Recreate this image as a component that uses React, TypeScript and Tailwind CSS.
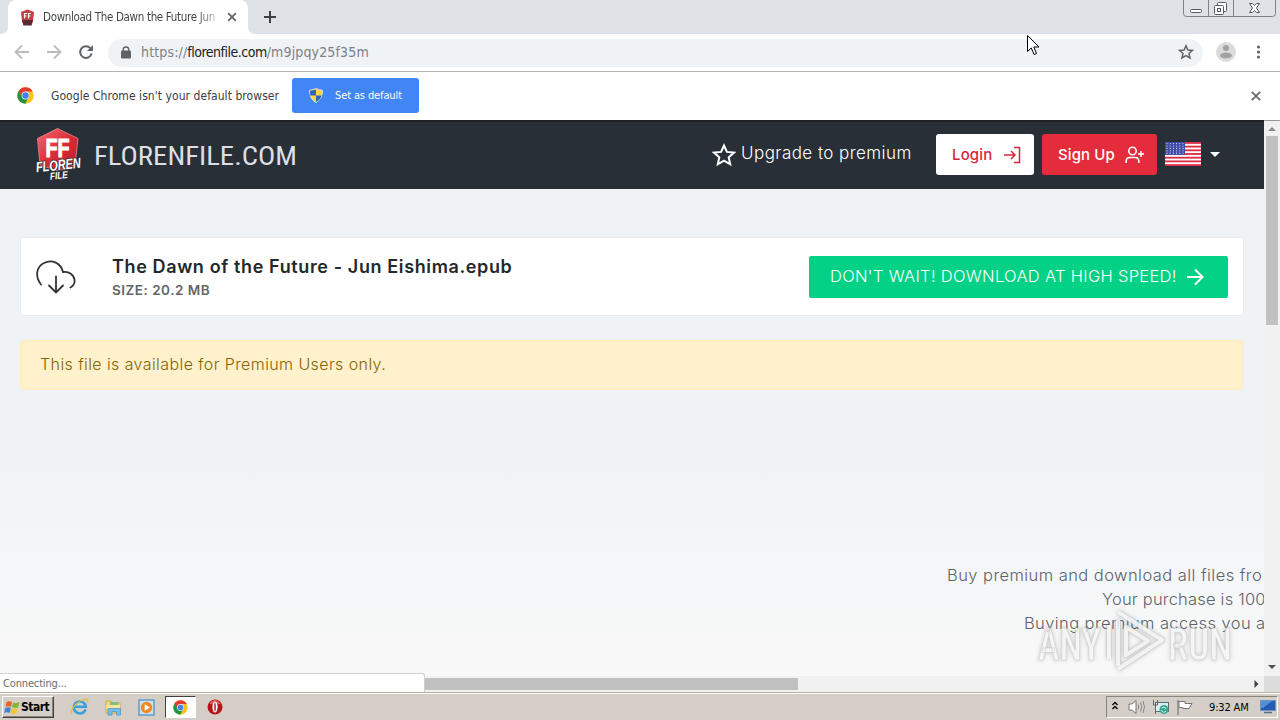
import type { ReactNode } from "react";

const UI_FONT = "font-['DejaVu_Sans_Condensed','DejaVu_Sans',sans-serif] [font-stretch:condensed]";

function ChromeLogo({ size }: { size: number }) {
  return (
    <svg width={size} height={size} viewBox="0 0 48 48">
      <circle cx="24" cy="24" r="23" fill="#fbc116" />
      <path d="M4 12.500A23 23 0 0 1 44 12.500H24L15 30Z" fill="#e33b2e" />
      <path d="M4 12.500A23 23 0 0 0 23 47L33 29 24 34 15 29Z" fill="#229342" />
      <circle cx="24" cy="24" r="11" fill="#e8eefb" />
      <circle cx="24" cy="24" r="9" fill="#3f82f0" />
    </svg>
  );
}

function FlorenIcon() {
  return (
    <svg width="15" height="17" viewBox="0 0 15 17" className="shrink-0">
      <path d="M7.500 0.500L14 3 13 12 11.500 16H3.500L2 12 1 3Z" fill="#c93a44" />
      <path d="M2 11H13L11.500 16.500H3.500Z" fill="#5a2c30" />
      <path d="M4.500 9.500V4.500H7M4.500 7H6.500M8.500 9.500V4.500H11M8.500 7H10.500" fill="none" stroke="#fff" strokeWidth="1.200" />
    </svg>
  );
}

function FlorenLogo() {
  return (
    <svg width="50" height="56" viewBox="0 0 50 56" className="shrink-0 overflow-visible font-['Liberation_Sans',sans-serif] font-bold">
      <defs>
        <linearGradient id="shield" x1="0" y1="0" x2="1" y2="1">
          <stop offset="0" stopColor="#f46a72" />
          <stop offset="0.500" stopColor="#dc2c38" />
          <stop offset="1" stopColor="#b51c26" />
        </linearGradient>
      </defs>
      <path d="M24.500 1.500L45 11.500 42 38 25 44 7 38 4.500 11.500Z" fill="url(#shield)" stroke="#e98a90" strokeWidth="0.800" />
      <text x="12.500" y="29.500" fontSize="26" textLength="24" lengthAdjust="spacingAndGlyphs" fill="#fff" stroke="#fff" strokeWidth="1">
        FF
      </text>
      <g transform="rotate(-6 25 40)">
        <text x="3" y="43" fontSize="14.500" fontStyle="italic" textLength="45" lengthAdjust="spacingAndGlyphs" fill="#fff" stroke="#292f36" strokeWidth="1.500" paintOrder="stroke">
          FLOREN
        </text>
      </g>
      <g transform="rotate(-5 25 50)">
        <text x="17" y="52" fontSize="10" fontStyle="italic" textLength="18" lengthAdjust="spacingAndGlyphs" fill="#fff">
          FILE
        </text>
      </g>
    </svg>
  );
}

function UsFlag() {
  return (
    <svg width="36" height="24" viewBox="0 0 36 24" className="shrink-0">
      <rect width="36" height="24" fill="#fff" />
      {[0, 1, 2, 3, 4, 5, 6].map((i) => (
        <rect key={i} y={i * 3.69} width="36" height="1.850" fill="#dc2f45" />
      ))}
      <rect width="20" height="12.920" fill="#3e4ba8" />
      {[0, 1, 2, 3, 4].map((row) =>
        [0, 1, 2, 3, 4, 5].map((col) => (
          <circle key={`${row}-${col}`} cx={2 + col * 3.2} cy={1.6 + row * 2.4} r="0.600" fill="#dfe3f7" />
        ))
      )}
    </svg>
  );
}

function TabStrip() {
  return (
    <div className="flex h-[34px] justify-between bg-[#dee1e6]">
      <div className="flex">
        <svg width="8" height="34" viewBox="0 0 8 34">
          <path d="M8 26Q8 34 0 34H8Z" fill="#fff" />
        </svg>
        <div className="flex w-60 items-center rounded-t-lg bg-white pl-3">
          <FlorenIcon />
          <span className="ml-2 w-[173px] overflow-hidden whitespace-nowrap bg-linear-to-r from-[#3c4043] from-88% to-[#3c404355] bg-clip-text pt-px text-[11.5px] tracking-[-0.330px] text-transparent">
            Download The Dawn the Future Jun
          </span>
          <svg width="10" height="10" viewBox="0 0 10 10" className="ml-[11px]">
            <path d="M1.200 1.200L8.800 8.800M8.800 1.200L1.200 8.800" stroke="#5f6368" strokeWidth="1.700" />
          </svg>
        </div>
        <svg width="30" height="34" viewBox="0 0 30 34">
          <path d="M0 26Q0 34 8 34H0Z" fill="#fff" />
          <path d="M22 11V23M16 17H28" stroke="#3c4043" strokeWidth="2" />
        </svg>
      </div>
      <svg width="93" height="17" viewBox="0 0 93 17" className="mr-1" fill="none">
        <path d="M0.500 0V13.500Q0.500 16.500 3.500 16.500H89.500Q92.500 16.500 92.500 13.500V0M25.500 0V16M50.500 0V16" stroke="#7d838c" />
        <rect x="7.500" y="9.500" width="11" height="3" rx="1" fill="#fff" stroke="#555b65" />
        <rect x="34.500" y="2.500" width="9" height="9" rx="1" fill="#fff" stroke="#555b65" />
        <rect x="31.500" y="5.500" width="9" height="9" rx="1" fill="#fff" stroke="#555b65" />
        <rect x="34.500" y="8.500" width="3" height="3" stroke="#555b65" />
        <path d="M66.500 3.500H69.500L71.500 5.500 73.500 3.500H76.500L73.500 8 76.500 12.500H73.500L71.500 10.500 69.500 12.500H66.500L69.500 8Z" fill="#fff" stroke="#555b65" />
      </svg>
    </div>
  );
}

function Toolbar() {
  return (
    <div className="flex h-[38px] items-center border-b border-[#b4b4b4] bg-white">
      <svg width="108" height="37" viewBox="0 0 108 37" fill="none" className="shrink-0">
        <path d="M29 18H16M22 11.500L15.500 18 22 24.500" stroke="#b9bbbd" strokeWidth="1.800" />
        <path d="M47 18H60M54 11.500L60.500 18 54 24.500" stroke="#b9bbbd" strokeWidth="1.800" />
        <path d="M90.300 14.200A5.800 5.800 0 1 0 91.600 19.500" stroke="#5f6368" strokeWidth="2" />
        <path d="M93 11V17H87Z" fill="#5f6368" />
      </svg>
      <div className="flex h-7 w-[1095px] items-center justify-between rounded-full bg-[#f0f3f5] pr-[9px] pl-[13px]">
        <div className="flex items-center">
          <svg width="10" height="13" viewBox="0 0 10 13">
            <rect y="4.500" width="10" height="8" rx="1" fill="#5f6368" />
            <path d="M2.300 5V3.500Q2.300 1 5 1T7.700 3.500V5" fill="none" stroke="#5f6368" strokeWidth="1.400" />
          </svg>
          <span className="ml-2.5 whitespace-nowrap text-[14px] tracking-[0.150px] text-[#7b8085]">
            https://<span className="tracking-[-0.500px] text-[#202124]">florenfile.com</span>/m9jpqy25f35m
          </span>
        </div>
        <svg width="16" height="16" viewBox="0 0 16 16" className="-mt-0.5">
          <path d="M8 1.800L9.900 6 14.400 6.400 11 9.400 12 13.900 8 11.500 4 13.900 5 9.400 1.600 6.400 6.100 6Z" fill="none" stroke="#5f6368" strokeWidth="1.500" />
        </svg>
      </div>
      <svg width="77" height="37" viewBox="0 0 77 37">
        <circle cx="23" cy="18" r="10" fill="#dcdcdc" />
        <circle cx="23" cy="14" r="3" fill="#a2a2a2" />
        <ellipse cx="23" cy="21.500" rx="6" ry="3" fill="#a2a2a2" />
        <circle cx="55.500" cy="13" r="1.600" fill="#5f6368" />
        <circle cx="55.500" cy="18" r="1.600" fill="#5f6368" />
        <circle cx="55.500" cy="23" r="1.600" fill="#5f6368" />
      </svg>
    </div>
  );
}

function InfoBar() {
  return (
    <div className="flex h-12 items-center bg-white pb-px pl-[17px]">
      <ChromeLogo size={17} />
      <span className="ml-[17px] w-[229px] whitespace-nowrap text-[12px] tracking-[0.060px] text-[#3c4043]">
        Google Chrome isn't your default browser
      </span>
      <div className="ml-3 flex h-[35px] w-[127px] items-center rounded-[3px] bg-[#4285f4] pl-[17px]">
        <svg width="14" height="15" viewBox="0 0 14 15">
          <path d="M7 0.500Q10 2 13.500 2.200Q13.500 11 7 14.500Q0.500 11 0.500 2.200Q4 2 7 0.500Z" fill="#ffd83a" stroke="#d8dde6" />
          <path d="M7 1.500V7.500H1.200Q1 5 1 2.800Q4 2.500 7 1.500ZM7 7.500H12.500Q11.500 11.500 7 14Z" fill="#2f66b8" />
        </svg>
        <span className="ml-3 whitespace-nowrap pt-px text-[11px] tracking-[-0.120px] text-white">Set as default</span>
      </div>
      <svg width="10" height="10" viewBox="0 0 10 10" className="mr-[19px] ml-auto">
        <path d="M0.800 0.800L9.200 9.200M9.200 0.800L0.800 9.200" stroke="#6a6d70" strokeWidth="1.900" />
      </svg>
    </div>
  );
}

function SiteHeader() {
  return (
    <header className="flex h-[69px] items-center border-t-2 border-[#1e2226] bg-[#292f36] pb-0.5 pl-[33px] text-white">
      <FlorenLogo />
      <svg width="206" height="30" viewBox="0 0 206 30" className="ml-2.5">
        <text x="1" y="25" fontSize="25" textLength="203" lengthAdjust="spacingAndGlyphs" fill="#dcdfe5" className="font-['Roboto',sans-serif]">
          FLORENFILE.COM
        </text>
      </svg>
      <div className="ml-auto flex items-center">
        <svg width="24" height="24" viewBox="0 0 24 24" className="mr-[5px]">
          <path d="M12 2.500L14.900 8.900 22 9.600 16.700 14.300 18.200 21.300 12 17.700 5.800 21.300 7.300 14.300 2 9.600 9.100 8.900Z" fill="none" stroke="#fff" strokeWidth="2" />
        </svg>
        <span className="w-[195px] whitespace-nowrap pb-px text-[17px] font-light tracking-[0.450px]">Upgrade to premium</span>
        <div className="flex h-[41px] w-[98px] items-center rounded-[3px] bg-white pl-4 text-[15px] text-[#d3283c]">
          <span className="w-[51px] pt-0.5 font-medium tracking-[0.150px]">Login</span>
          <svg width="18" height="18" viewBox="0 0 18 18" fill="none" stroke="currentColor" strokeWidth="1.500">
            <path d="M1 9H12M8 5L12 9 8 13M11 1.500H16.500V16.500H11" />
          </svg>
        </div>
        <div className="ml-2 flex h-[41px] w-[115px] items-center rounded-[3px] bg-[#e52c3c] pl-4 text-[15px]">
          <span className="w-[67px] whitespace-nowrap pt-0.5 font-medium tracking-[0.100px]">Sign Up</span>
          <svg width="20" height="18" viewBox="0 0 20 18" fill="none" stroke="currentColor" strokeWidth="1.600">
            <circle cx="7.500" cy="5" r="3.700" />
            <path d="M1.200 17V15Q1.200 11.500 5 11.500H10Q13.800 11.500 13.800 15V17M16 5V11M13 8H19" />
          </svg>
        </div>
        <div className="mr-11 ml-2 flex items-center pb-px">
          <UsFlag />
          <svg width="10" height="5" viewBox="0 0 10 5" className="ml-[9px]">
            <path d="M0 0H10L5 5Z" fill="#fff" />
          </svg>
        </div>
      </div>
    </header>
  );
}

function PromoLine({ children, indent }: { children: ReactNode; indent: string }) {
  return <p className={`h-6 overflow-hidden whitespace-nowrap ${indent}`}>{children}</p>;
}

function Watermark() {
  return (
    <svg
      width="200"
      height="70"
      viewBox="0 0 200 70"
      className="absolute top-[606px] left-[1036px] font-['Roboto',sans-serif] drop-shadow-[0_0_2px_#00000040]"
    >
      <g fill="#fff" fillOpacity="0.750" stroke="#c4c4c4" strokeOpacity="0.500" strokeWidth="1" fontSize="45" fontWeight="500">
        <text x="2" y="54" textLength="63" lengthAdjust="spacingAndGlyphs">ANY</text>
        <text x="132" y="54" textLength="64" lengthAdjust="spacingAndGlyphs">RUN</text>
      </g>
      <g fill="none" strokeLinejoin="round">
        <path d="M73 19V53M82 14V60M82 6L126 34 82 63M90 21L112 35 90 49Z" stroke="#c4c4c4" strokeOpacity="0.500" strokeWidth="5.500" />
        <path d="M73 19V53M82 14V60M82 6L126 34 82 63M90 21L112 35 90 49Z" stroke="#fff" strokeOpacity="0.750" strokeWidth="4" />
      </g>
    </svg>
  );
}

function PageContent() {
  return (
    <main className="h-[487px] bg-linear-to-b from-[#eff3f6] from-55% to-[#f8f8f8] to-95% px-5 pt-12 font-['Inter',sans-serif]">
      <div className="-mr-5 w-[1224px]">
        <div className="flex h-[79px] items-center rounded-[4px] border border-[#e8ebed] bg-white pl-[15px]">
          <svg width="40" height="34" viewBox="0 0 40 34" fill="none" stroke="#333" strokeWidth="1.800" strokeLinecap="round">
            <path d="M5 24.500C-1 17 0 7 8 3C16 -1 25 3 27 12C33 11 38 15 38.500 20C39 23 37 26 34.500 27.500" />
            <path d="M20 16.500V32M13 25.500L20 32.500 27 25.500" />
          </svg>
          <div className="ml-9 pt-0.5">
            <h1 className="whitespace-nowrap text-[18px] leading-6 font-semibold tracking-[0.620px] text-[#24282c]">
              The Dawn of the Future - Jun Eishima.epub
            </h1>
            <p className="whitespace-nowrap text-[13.5px] leading-[22px] font-semibold tracking-[0.500px] text-[#666]">SIZE: 20.2 MB</p>
          </div>
          <div className="mr-[15px] ml-auto flex h-[42px] w-[419px] items-center rounded-[2px] bg-[#03d286] pl-[21px] text-white">
            <span className="w-[356px] whitespace-nowrap text-[16.5px] font-light tracking-[0.310px]">DON'T WAIT! DOWNLOAD AT HIGH SPEED!</span>
            <svg width="18" height="18" viewBox="0 0 18 18" fill="none" stroke="currentColor" strokeWidth="2">
              <path d="M1 9H16M9 1.500L16.500 9 9 16.500" />
            </svg>
          </div>
        </div>
        <div className="mt-6 flex h-[50px] items-center rounded-[4px] border border-[#ffeeba] bg-[#fff1cc] pb-0.5 pl-[19px] text-[16px] font-light tracking-[0.410px] text-[#856404]">
          This file is available for Premium Users only.
        </div>
      </div>
      <div className="-mr-5 mt-[173px] text-[16.5px] leading-6 font-light text-[#5c636a]">
        <PromoLine indent="pl-[927px] tracking-[0.440px]">Buy premium and download all files fro</PromoLine>
        <PromoLine indent="pl-[1082px] tracking-[0.200px]">Your purchase is 100</PromoLine>
        <PromoLine indent="pl-[1004px] tracking-[0.400px]">Buying premium access you a</PromoLine>
      </div>
    </main>
  );
}

function VerticalScrollbar() {
  return (
    <div className="flex w-4 flex-col items-center justify-between border-t border-[#9a9a9a] bg-[#f1f1f1]">
      <div>
        <svg width="12" height="15" viewBox="0 0 12 15">
          <path d="M2 10H10L6 6Z" fill="#8a8a8a" />
        </svg>
        <div className="h-[189px] w-3 bg-[#c1c1c1]" />
      </div>
      <svg width="12" height="16" viewBox="0 0 12 16">
        <path d="M2 5H10L6 9Z" fill="#505050" />
      </svg>
    </div>
  );
}

function HorizontalScrollbar() {
  return (
    <div className="relative flex h-4 bg-[#dcdcdc]">
      <div className="flex w-[1264px] items-center justify-between bg-[#f1f1f1] pr-[5px] pl-[424px]">
        <div className="h-3 w-[374px] bg-[#c1c1c1]" />
        <svg width="5" height="8" viewBox="0 0 5 8">
          <path d="M0.500 0L4.500 4 0.500 8Z" fill="#404040" />
        </svg>
      </div>
      <div className="absolute -top-[3px] left-0 flex h-[19px] w-[425px] items-center rounded-tr-[3px] border-t border-r border-[#d0d0d0] bg-white pt-0.5 pl-[3px] text-[11px] tracking-[-0.150px] text-[#6a6d70]">
        Connecting...
      </div>
    </div>
  );
}

function Taskbar() {
  return (
    <footer className="flex h-7 items-center border-t border-[#b5b1a9] bg-[#d5cec6] pb-px shadow-[inset_0_1px_0_#fff]">
      <div className="mt-0.5 ml-0.5 flex h-[22px] w-[52px] items-center border border-t-white border-r-[#404040] border-b-[#404040] border-l-white pl-px text-[12px] font-bold tracking-[-0.500px] text-black shadow-[inset_-1px_-1px_0_#8a867e]">
        <svg width="16" height="15" viewBox="0 0 16 15" className="mr-px shrink-0">
          <path d="M2.500 2Q5 0.500 8 2L7 7Q4 5.500 1.500 7Z" fill="#e8622a" />
          <path d="M9 2.500Q12 4 15.500 2L14 7.500Q11 8.500 8 7Z" fill="#7cb83c" />
          <path d="M1.200 8Q4 6.500 6.800 8L5.800 13Q3 11.500 0.200 13Z" fill="#3f86d6" />
          <path d="M7.800 8Q10.500 9.500 13.800 8.500L12.500 13.500Q9.500 15 6.800 13Z" fill="#f6c62c" />
        </svg>
        Start
      </div>
      <div className="mt-0.5 ml-4 flex items-center">
        <svg width="20" height="18" viewBox="0 0 20 18" fill="none">
          <path d="M15.500 11.500A6 6 0 1 1 15.800 8.800H4.500" stroke="#3aa0dc" strokeWidth="2.600" />
          <path d="M2 16C-1 13 6 4 14 1.500C18 0.500 18.500 3 17 5" stroke="#e9bd3c" strokeWidth="1.300" />
        </svg>
        <svg width="17" height="17" viewBox="0 0 17 17" className="ml-[15px]">
          <path d="M1 2H6L8 4H15V14H1Z" fill="#f2d777" stroke="#d1aa4a" />
          <path d="M5 3H13V7H5Z" fill="#7dc07f" />
          <path d="M1 6H15V10H1Z" fill="#f8e49c" />
          <path d="M3 9.500H15.500V16H11.500V12.500H7V16H3Z" fill="#72bce6" stroke="#4b9acb" strokeWidth="0.800" />
        </svg>
        <svg width="17" height="17" viewBox="0 0 17 17" className="ml-4">
          <rect x="1" y="1" width="15" height="15" fill="#c9e2f5" stroke="#609bc9" strokeWidth="1.500" />
          <circle cx="8.500" cy="8.500" r="5.700" fill="#ef8a21" />
          <path d="M6.700 5.300L12 8.500 6.700 11.700Z" fill="#fff" />
        </svg>
        <div className="ml-2.5 flex h-[22px] w-[31px] items-center justify-center border border-t-[#404040] border-r-white border-b-white border-l-[#404040] bg-white">
          <ChromeLogo size={15} />
        </div>
        <svg width="16" height="16" viewBox="0 0 16 16" className="ml-[11px]">
          <circle cx="8" cy="8" r="7.500" fill="#b3151a" />
          <path d="M2 5Q8 -3 14 5Z" fill="#df5a5a" />
          <ellipse cx="8" cy="8" rx="2.600" ry="5.500" fill="#fff" />
          <ellipse cx="8" cy="8" rx="0.700" ry="4.500" fill="#8d1015" />
        </svg>
      </div>
      <div className="mt-0.5 mr-0.5 ml-auto flex h-[22px] w-[172px] items-center border border-t-[#8a867e] border-r-white border-b-white border-l-[#8a867e] text-black">
        <svg width="82" height="20" viewBox="0 0 82 20" fill="none" className="ml-[5px] shrink-0">
          <path d="M0.500 8L3 5.500 5.500 8M0.500 12L3 9.500 5.500 12" stroke="#000" strokeWidth="1.300" />
          <path d="M17 7H20L24 3.500V16.500L20 13H17Z" fill="#fff" stroke="#777" />
          <path d="M26 7.500Q27.500 10 26 12.500M28.500 5.500Q31 10 28.500 14.500M31 4Q34 10 31 16" stroke="#888" />
          <rect x="43.500" y="5.500" width="13" height="9" fill="#ddecef" stroke="#596e70" />
          <path d="M41.500 3V8H45.500V3M43.500 8V17" stroke="#666" />
          <circle cx="52" cy="12.500" r="4.500" fill="#35a790" />
          <path d="M49.500 11Q52 8.500 54.500 12M54 14Q51 17 49.500 13" stroke="#d8f5e8" />
          <path d="M66 3V18" stroke="#888" strokeWidth="1.500" />
          <path d="M67 4.500H73V6.500H80L77 11.500H71V10.500H67Z" fill="#fff" stroke="#777" />
        </svg>
        <span className="ml-[15px] w-[43px] whitespace-nowrap pt-0.5 text-[11px] tracking-[-0.150px]">9:32 AM</span>
        <svg width="16" height="14" viewBox="0 0 16 14" className="ml-2">
          <rect x="0.500" y="0.500" width="15" height="10" fill="#245cb4" stroke="#6e93c4" />
          <path d="M1 1H12L3 8H1Z" fill="#5190d9" />
          <path d="M4 12.500H12" stroke="#556b87" strokeWidth="1.500" />
        </svg>
      </div>
    </footer>
  );
}

export default function App() {
  return (
    <div className={`relative h-[720px] w-[1280px] overflow-hidden bg-white ${UI_FONT}`}>
      <TabStrip />
      <Toolbar />
      <InfoBar />
      <div className="flex h-[556px]">
        <div className="w-[1264px] overflow-hidden font-['Inter',sans-serif]">
          <SiteHeader />
          <PageContent />
        </div>
        <VerticalScrollbar />
      </div>
      <HorizontalScrollbar />
      <Taskbar />
      <Watermark />
      {/* Mouse pointer */}
      <svg width="13" height="21" viewBox="0 0 13 21" className="absolute top-[35px] left-[1027px]">
        <path d="M0.500 0.500V16.500L4.300 13 7 19.500 9.500 18.500 6.800 12H12Z" fill="#fff" stroke="#000" />
      </svg>
    </div>
  );
}
